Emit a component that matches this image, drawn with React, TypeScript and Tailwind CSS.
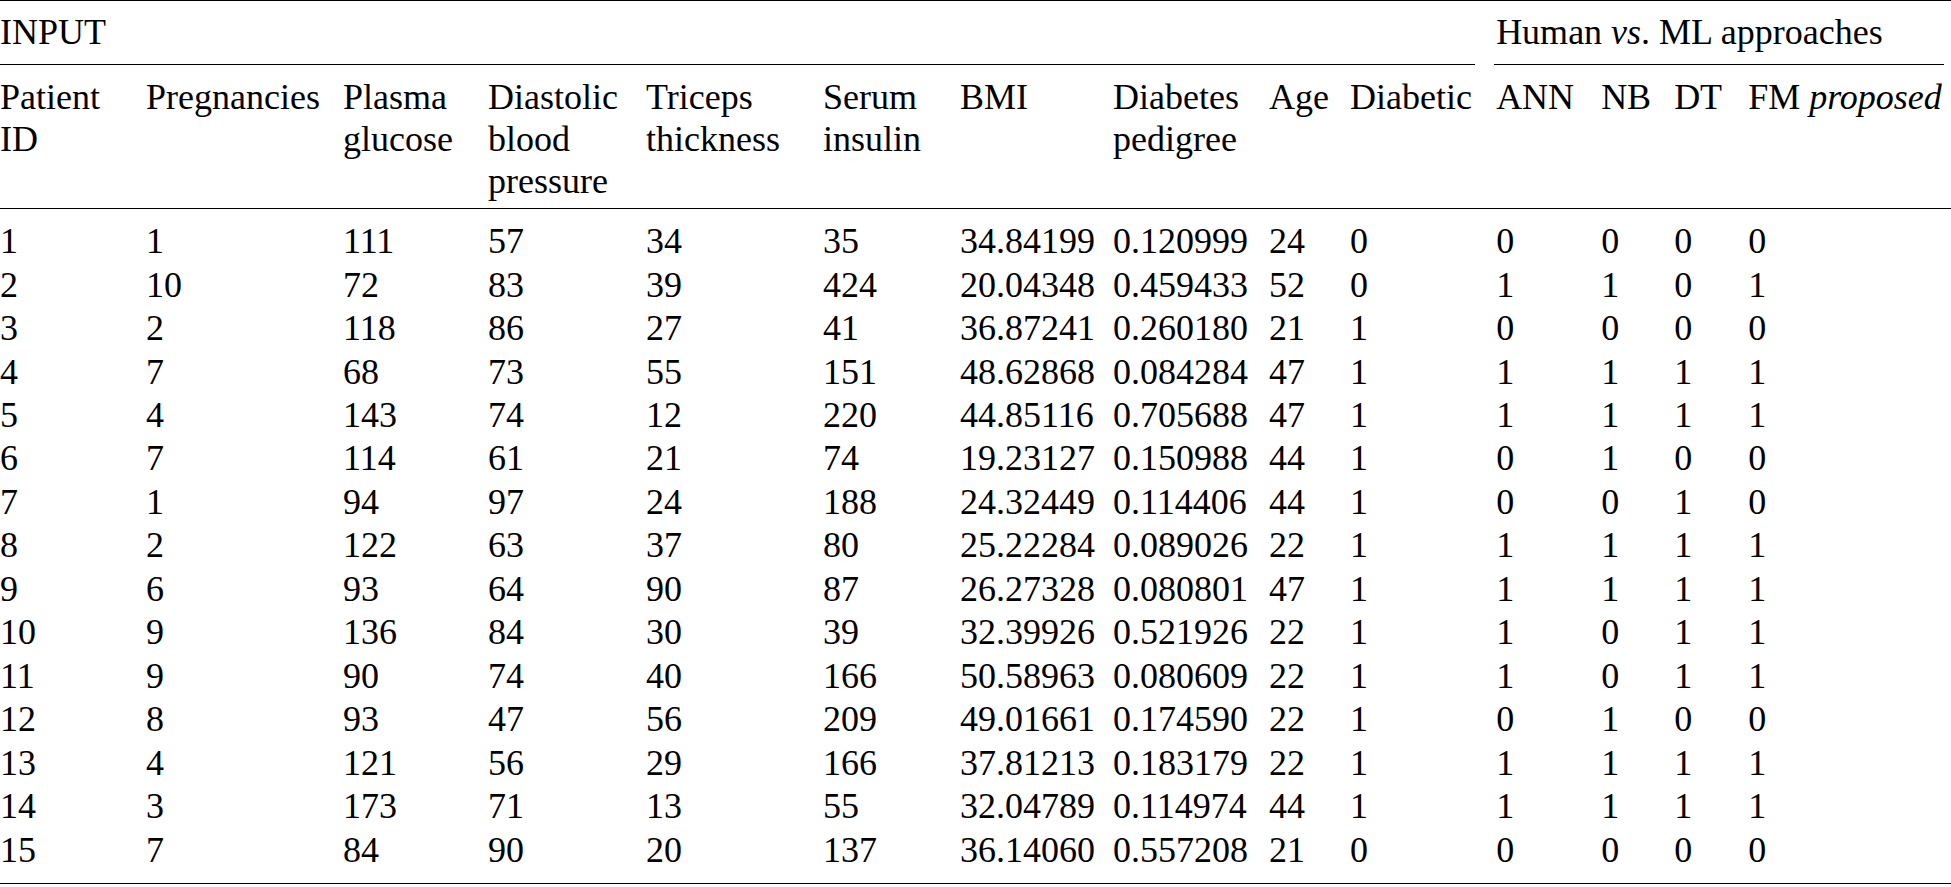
import React from 'react';

const rows: string[][] = [
  ['1', '1', '111', '57', '34', '35', '34.84199', '0.120999', '24', '0', '0', '0', '0', '0'],
  ['2', '10', '72', '83', '39', '424', '20.04348', '0.459433', '52', '0', '1', '1', '0', '1'],
  ['3', '2', '118', '86', '27', '41', '36.87241', '0.260180', '21', '1', '0', '0', '0', '0'],
  ['4', '7', '68', '73', '55', '151', '48.62868', '0.084284', '47', '1', '1', '1', '1', '1'],
  ['5', '4', '143', '74', '12', '220', '44.85116', '0.705688', '47', '1', '1', '1', '1', '1'],
  ['6', '7', '114', '61', '21', '74', '19.23127', '0.150988', '44', '1', '0', '1', '0', '0'],
  ['7', '1', '94', '97', '24', '188', '24.32449', '0.114406', '44', '1', '0', '0', '1', '0'],
  ['8', '2', '122', '63', '37', '80', '25.22284', '0.089026', '22', '1', '1', '1', '1', '1'],
  ['9', '6', '93', '64', '90', '87', '26.27328', '0.080801', '47', '1', '1', '1', '1', '1'],
  ['10', '9', '136', '84', '30', '39', '32.39926', '0.521926', '22', '1', '1', '0', '1', '1'],
  ['11', '9', '90', '74', '40', '166', '50.58963', '0.080609', '22', '1', '1', '0', '1', '1'],
  ['12', '8', '93', '47', '56', '209', '49.01661', '0.174590', '22', '1', '0', '1', '0', '0'],
  ['13', '4', '121', '56', '29', '166', '37.81213', '0.183179', '22', '1', '1', '1', '1', '1'],
  ['14', '3', '173', '71', '13', '55', '32.04789', '0.114974', '44', '1', '1', '1', '1', '1'],
  ['15', '7', '84', '90', '20', '137', '36.14060', '0.557208', '21', '0', '0', '0', '0', '0'],
];

// header labels, one entry per line
const headers: React.ReactNode[][] = [
  ['Patient', 'ID'],
  ['Pregnancies'],
  ['Plasma', 'glucose'],
  ['Diastolic', 'blood', 'pressure'],
  ['Triceps', 'thickness'],
  ['Serum', 'insulin'],
  ['BMI'],
  ['Diabetes', 'pedigree'],
  ['Age'],
  ['Diabetic'],
  ['ANN'],
  ['NB'],
  ['DT'],
  [<span key="fm">FM <i>proposed</i></span>],
];

export default function App() {
  return (
    <div className="min-h-screen bg-white text-black font-['Liberation_Serif',serif] text-[36px]">
      <table className="w-[1951px] table-fixed border-collapse border-y border-black">
        <colgroup>
          <col className="w-[146px]" />
          <col className="w-[197px]" />
          <col className="w-[145px]" />
          <col className="w-[158px]" />
          <col className="w-[177px]" />
          <col className="w-[137px]" />
          <col className="w-[153px]" />
          <col className="w-[156px]" />
          <col className="w-[81px]" />
          <col className="w-[146px]" />
          <col className="w-[105px]" />
          <col className="w-[73px]" />
          <col className="w-[74px]" />
          <col />
        </colgroup>
        <thead>
          <tr>
            <th colSpan={10} className="p-0 text-left font-normal align-top">
              <div className="mr-[21px] border-b border-black pt-[10px] pb-[10px] leading-[43.2px]">INPUT</div>
            </th>
            <th colSpan={4} className="p-0 text-left font-normal align-top">
              <div className="-ml-[2px] mr-[7px] border-b border-black pt-[10px] pb-[10px] pl-[2px] leading-[43.2px] whitespace-nowrap">
                Human <i>vs</i>. ML approaches
              </div>
            </th>
          </tr>
          <tr className="border-b border-black">
            {headers.map((lines, i) => (
              <th key={i} className="p-0 pt-[11px] pb-[6px] text-left font-normal align-top leading-[42px] whitespace-nowrap">
                {lines.map((l, j) => (
                  <div key={j}>{l}</div>
                ))}
              </th>
            ))}
          </tr>
        </thead>
        <tbody>
          {rows.map((r, ri) => (
            <tr key={ri}>
              {r.map((v, ci) => (
                <td
                  key={ci}
                  className={`p-0 text-left align-top leading-[43.45px] whitespace-nowrap ${
                    ri === 0 ? 'pt-[11px]' : ''
                  } ${ri === rows.length - 1 ? 'pb-[11px]' : ''}`}
                >
                  {v}
                </td>
              ))}
            </tr>
          ))}
        </tbody>
      </table>
    </div>
  );
}
